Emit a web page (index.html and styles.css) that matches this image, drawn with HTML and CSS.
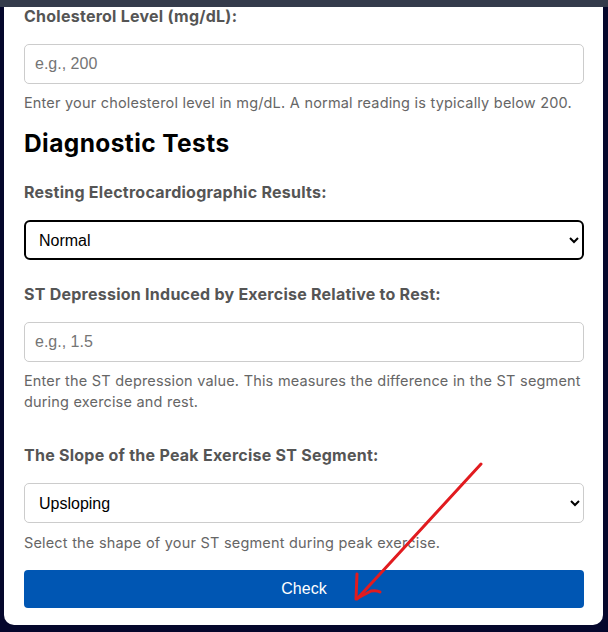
FILE: index.html
```html
<!DOCTYPE html>
<html lang="en">
<head>
<meta charset="utf-8">
<title>Heart Check</title>
<link rel="stylesheet" href="styles.css">
</head>
<body>
<div class="topbar"></div>
<main class="card">
  <form class="form">
    <div class="group">
      <label class="label" for="chol">Cholesterol Level (mg/dL):</label>
      <input class="field" id="chol" type="text" placeholder="e.g., 200">
      <p class="help">Enter your cholesterol level in mg/dL. A normal reading is typically below 200.</p>
    </div>

    <h2 class="section-title">Diagnostic Tests</h2>

    <div class="group">
      <label class="label" for="ecg">Resting Electrocardiographic Results:</label>
      <select class="field select select-active" id="ecg">
        <option>Normal</option>
        <option>ST-T wave abnormality</option>
        <option>Left ventricular hypertrophy</option>
      </select>
    </div>

    <div class="group group-spaced">
      <label class="label" for="oldpeak">ST Depression Induced by Exercise Relative to Rest:</label>
      <input class="field" id="oldpeak" type="text" placeholder="e.g., 1.5">
      <p class="help">Enter the ST depression value. This measures the difference in the ST segment during exercise and rest.</p>
    </div>

    <div class="group group-last">
      <label class="label" for="slope">The Slope of the Peak Exercise ST Segment:</label>
      <select class="field select" id="slope">
        <option>Upsloping</option>
        <option>Flat</option>
        <option>Downsloping</option>
      </select>
      <p class="help help-tight">Select the shape of your ST segment during peak exercise.</p>
    </div>

    <button class="btn" type="button">Check</button>
  </form>
</main>
<svg class="annotation" width="608" height="632" viewBox="0 0 608 632" aria-hidden="true">
  <path d="M481 464 L357 599" />
  <path d="M357 574 L356 599 L371 591 Q377 590 380 592" />
</svg>
</body>
</html>
```
FILE: styles.css
```css
html, body {
  margin: 0;
  padding: 0;
}
body {
  background: #05072c;
  font-family: "Inter", "Liberation Sans", sans-serif;
  height: 632px;
  overflow: hidden;
  position: relative;
}
.topbar {
  position: fixed;
  top: 0;
  left: 0;
  right: 0;
  height: 7px;
  background: #343b4b;
  z-index: 2;
}
.card {
  margin-left: 4px;
  width: 599px;
  box-sizing: border-box;
  background: #fff;
  padding: 4px 19px 17px 20px;
  border-radius: 0 0 10px 10px;
}
.form {
  display: flex;
  flex-direction: column;
}
.group {
  display: flex;
  flex-direction: column;
}
.label {
  display: block;
  font-weight: 700;
  font-size: 16px;
  line-height: 24px;
  letter-spacing: 0.25px;
  color: #555;
  margin-bottom: 16px;
}
.field {
  box-sizing: border-box;
  width: 100%;
  height: 40px;
  margin: 0;
  padding: 0 10px;
  border: 1px solid #ccc;
  border-radius: 5px;
  background: #fff;
  font-family: "Liberation Sans", Arial, sans-serif;
  font-size: 16px;
  color: #000;
}
.field::placeholder {
  color: #757575;
}
.select {
  padding: 0 4px 0 10px;
}
.select-active {
  border: 2px solid #000;
  border-radius: 6px;
  padding-left: 9px;
}
.help {
  margin: 8px 0 0;
  font-size: 14.5px;
  line-height: 21px;
  letter-spacing: 0.15px;
  word-spacing: 0.3px;
  color: #666;
}
.help-tight {
  margin-top: 9px;
}
.section-title {
  margin: 15px 0 22px;
  font-size: 24.5px;
  line-height: 30px;
  letter-spacing: 0.4px;
  font-weight: 700;
  color: #000;
}
.group-spaced {
  margin-top: 22px;
}
.group-last {
  margin-top: 31px;
}
.btn {
  margin-top: 17px;
  height: 38px;
  width: 100%;
  border: none;
  border-radius: 4px;
  background: #0056b3;
  color: #fff;
  font-family: "Liberation Sans", Arial, sans-serif;
  font-size: 16px;
}
.annotation {
  position: absolute;
  top: 0;
  left: 0;
  pointer-events: none;
  z-index: 3;
}
.annotation path {
  fill: none;
  stroke: #e11b1f;
  stroke-width: 3;
  stroke-linecap: round;
  stroke-linejoin: round;
}
```
